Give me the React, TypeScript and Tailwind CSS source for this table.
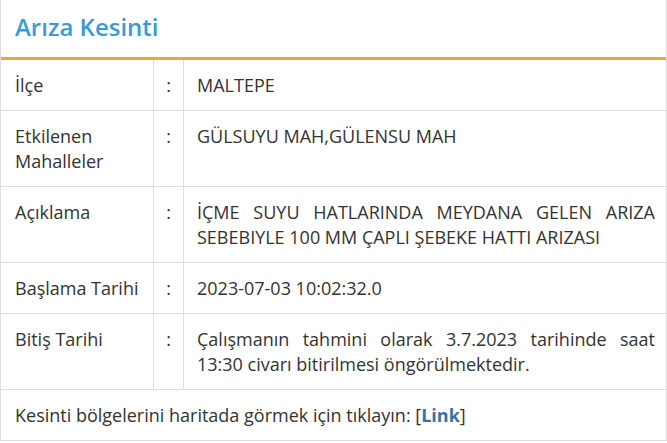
import React from 'react';

const rows = [
  { label: 'İlçe', value: 'MALTEPE' },
  { label: 'Etkilenen Mahalleler', value: 'GÜLSUYU MAH,GÜLENSU MAH' },
  { label: 'Açıklama', value: 'İÇME SUYU HATLARINDA MEYDANA GELEN ARIZA SEBEBIYLE 100 MM ÇAPLI ŞEBEKE HATTI ARIZASI' },
  { label: 'Başlama Tarihi', value: '2023-07-03 10:02:32.0' },
  { label: 'Bitiş Tarihi', value: 'Çalışmanın tahmini olarak 3.7.2023 tarihinde saat 13:30 civarı bitirilmesi öngörülmektedir.' },
];

export default function App() {
  return (
    <div className="w-[667px] h-[443px] bg-white text-[#333] font-['Open_Sans',sans-serif] overflow-hidden">
      <div className="w-[667px] border-l border-r border-b border-[#ddd]">
        {/* Title bar */}
        <div className="h-[60px] px-[14px] flex items-center border-b-[3px] border-[#e8a93a]">
          <h2 className="text-[24px] font-semibold text-[#3a9ad9] leading-none -mt-[4px]">Arıza Kesinti</h2>
        </div>

        {/* Detail rows */}
        <div className="grid grid-cols-[153px_30px_1fr] text-[18px] leading-[25px]">
          {rows.map((r) => (
            <React.Fragment key={r.label}>
              <div className="px-[14px] pt-[13px] pb-[12px] border-b border-r border-[#ddd]">{r.label}</div>
              <div className="pt-[13px] pb-[12px] border-b border-r border-[#ddd] text-center">:</div>
              <div className="pl-[13px] pr-[11px] pt-[13px] pb-[12px] border-b border-[#ddd] text-justify">{r.value}</div>
            </React.Fragment>
          ))}
        </div>

        {/* Footer */}
        <div className="px-[14px] pt-[13px] pb-[12px] text-[18px] leading-[25px]">
          Kesinti bölgelerini haritada görmek için tıklayın: [<a href="#" className="font-bold text-[#3a70a6]">Link</a>]
        </div>
      </div>
    </div>
  );
}
